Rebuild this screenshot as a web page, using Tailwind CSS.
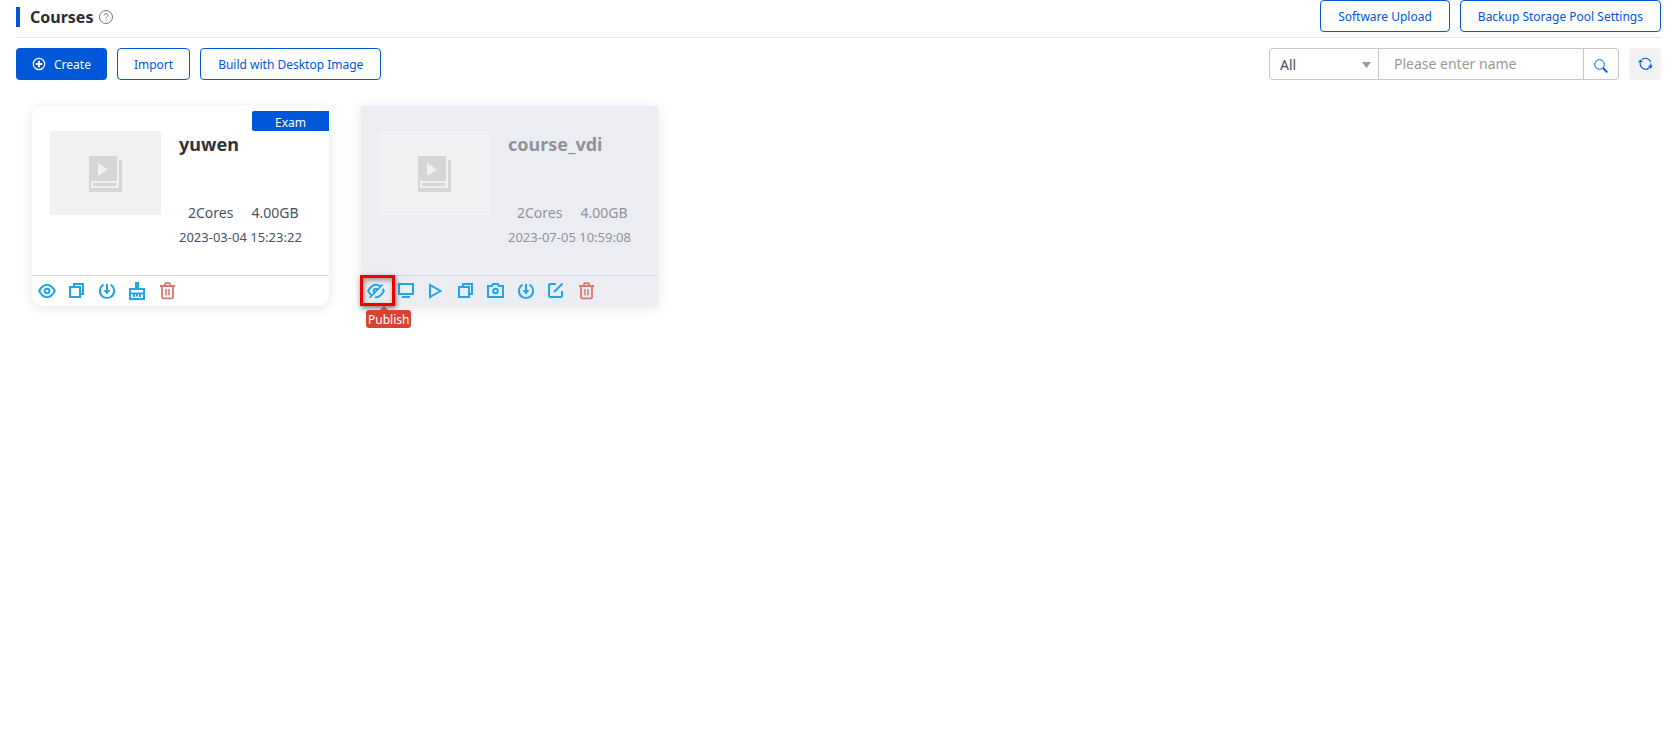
<!DOCTYPE html>
<html lang="en">
<head>
<meta charset="utf-8">
<meta name="viewport" content="width=device-width, initial-scale=1">
<title>Courses</title>
<script src="https://cdn.jsdelivr.net/npm/@tailwindcss/browser@4"></script>
</head>
<body class="bg-white font-['Noto_Sans','Open_Sans',sans-serif] text-[#4a5364]">
<svg class="hidden" aria-hidden="true">
  <symbol id="copy" viewBox="0 0 18 18"><path d="M2 5h10v10H2zM6 5V2h9v10h-3" fill="none" stroke="currentColor" stroke-width="2"/></symbol>
  <symbol id="power" viewBox="0 0 18 18"><path d="M5.500 2.600a7.200 7.200 0 1 0 7 0" fill="none" stroke="currentColor" stroke-width="2"/><path d="M9 2v7" stroke="currentColor" stroke-width="2"/><path d="M5.500 8h7L9 12.500z" fill="currentColor"/></symbol>
  <symbol id="trash" viewBox="0 0 18 18"><path d="M2 4h15M6.500 3.500L7.500 1.200h4l1 2.300M4 4v11.500l.8.800h9.400l.8-.8V4" fill="none" stroke="currentColor" stroke-width="1.800"/><path d="M8 7v6.500M11 7v6.500" stroke="currentColor" stroke-width="1.500"/></symbol>
  <symbol id="book" viewBox="0 0 33 36"><path d="M0 0h28v25H2v7h28V4h3v32H0z" fill="#d6d6d6"/><path d="M4 27h23v3H4z" fill="#d6d6d6"/><path d="M9 7v13l10-6.500z" fill="#f2f2f4"/></symbol>
</svg>

<main class="min-h-screen pl-4 pr-3.5">
  <header class="flex h-[38px] items-start justify-between border-b border-[#e6e6e6]">
    <div class="flex h-[34px] items-center">
      <span class="h-5 w-1 bg-[#0057d9]"></span>
      <h1 class="ml-2.5 text-base leading-5 font-bold text-[#2b2e33]">Courses</h1>
      <button type="button" aria-label="Help" class="ml-1.5 text-[#777]"><svg class="block size-3.5" viewBox="0 0 14 14" fill="none" stroke="currentColor"><circle cx="7" cy="7" r="6.500"/><path d="M5.200 5.500c0-2.500 3.700-2.300 3.700-.2 0 1.500-1.900 1.400-1.900 3.200M7 9.700v1.200"/></svg></button>
    </div>
    <div class="flex gap-2.5 text-xs text-[#0057d9]">
      <button type="button" class="h-8 rounded border border-[#0057d9] px-[17px] pt-0.5">Software Upload</button>
      <button type="button" class="h-8 rounded border border-[#0057d9] px-[17px] pt-0.5">Backup Storage Pool Settings</button>
    </div>
  </header>

  <div class="mt-2.5 flex items-center justify-between">
    <div class="flex gap-2.5 text-xs text-[#0057d9]">
      <button type="button" class="flex h-8 items-center gap-2 rounded bg-[#0057d9] px-4 text-white"><svg class="size-3.5" viewBox="0 0 14 14" fill="none" stroke="currentColor"><circle cx="7" cy="7" r="5.700" stroke-width="1.200"/><path d="M7 3.800v6.400M3.800 7h6.400" stroke-width="2"/></svg><span class="pt-0.5">Create</span></button>
      <button type="button" class="h-8 rounded border border-[#0057d9] px-4 pt-0.5">Import</button>
      <button type="button" class="h-8 rounded border border-[#0057d9] px-[17px] pt-0.5">Build with Desktop Image</button>
    </div>
    <div class="flex gap-2.5 text-sm">
      <form class="flex h-8 overflow-hidden rounded border border-[#c8c8c8]">
        <div class="relative w-[109px] border-r border-[#c8c8c8]">
          <select aria-label="Course type" class="h-full w-full appearance-none pl-2.5 pt-0.5 text-[#4a4f5a] outline-none"><option>All</option></select>
          <svg class="pointer-events-none absolute right-1.5 top-3 h-2 w-2.5" viewBox="0 0 10 8" fill="#999"><path d="M0 1h9L4.500 7z"/></svg>
        </div>
        <input type="text" aria-label="Name" placeholder="Please enter name" class="w-[204px] pl-[15px] text-[#4a4f5a] outline-none placeholder:text-[#999]">
        <button type="button" aria-label="Search" class="flex w-[35px] items-center justify-center border-l border-[#c8c8c8] text-[#0057d9]"><svg class="mt-1 size-3.5" viewBox="0 0 14 14" fill="none" stroke="currentColor"><circle cx="5.500" cy="5.500" r="4.800"/><path d="M9 9l4.300 4.300" stroke-width="1.800"/></svg></button>
      </form>
      <button type="button" aria-label="Refresh" class="flex size-8 items-center justify-center rounded bg-[#f2f2f2] text-[#0057d9]"><svg class="h-3.5 w-[15px]" viewBox="0 0 15 14" fill="none" stroke="currentColor"><path d="M4 2.500A5.500 5.500 0 0 1 12.700 5M2.200 5.500c-.7 5.500 5.300 8.500 9 5.500M12.800 9V6.500" stroke-width="1.100"/><path d="M0 5.500L2.300 2.500 5 5zM10 8.800h4.800l-2.400 3z" fill="currentColor" stroke="none"/></svg></button>
    </div>
  </div>

  <section class="mt-[26px] flex flex-wrap gap-8 pl-4 pb-8">
    <article class="relative w-[297px] rounded-[10px] bg-white shadow-[0_2px_12px_rgba(0,0,0,0.1)]">
      <span class="absolute right-0 top-[5px] flex h-5 w-[77px] items-center justify-center rounded-l-xs bg-[#0057d9] pt-1 text-xs text-white">Exam</span>
      <div class="flex h-[169px] pl-[18px] pt-[25px]">
        <div class="flex h-[84px] w-[111px] items-center justify-center bg-[#f1f1f3] pt-0.5"><svg class="h-9 w-[33px]"><use href="#book"/></svg></div>
        <div class="ml-[18px] pt-px">
          <h2 class="text-lg leading-6 font-bold text-[#303238]">yuwen</h2>
          <p class="mt-[47px] flex gap-[18px] pl-[9px] text-sm leading-5"><span>2Cores</span><span>4.00GB</span></p>
          <p class="mt-1 text-[13px] leading-5">2023-03-04 15:23:22</p>
        </div>
      </div>
      <div class="flex h-[31px] items-center gap-3 border-t border-[#d9dbe6] pl-1.5 text-[#20a5e7]">
        <button type="button" aria-label="Unpublish"><svg class="block size-[18px]" viewBox="0 0 18 18" fill="none" stroke="currentColor" stroke-width="2"><path d="M1.200 9C5.500.800 12.500.800 16.800 9 12.500 17.200 5.500 17.200 1.200 9z"/><circle cx="9" cy="9" r="2.300"/></svg></button>
        <button type="button" aria-label="Copy"><svg class="block size-[18px]"><use href="#copy"/></svg></button>
        <button type="button" aria-label="Export"><svg class="block size-[18px]"><use href="#power"/></svg></button>
        <button type="button" aria-label="Clean"><svg class="block size-[18px]" viewBox="0 0 18 18" fill="none" stroke="currentColor" stroke-width="2"><path d="M9 0v7" stroke-width="4"/><path d="M2 7h14v10H2zM1 11.500h16M6 12v3M9 12v2.500M12 12v3"/></svg></button>
        <button type="button" aria-label="Delete" class="text-[#dc7670]"><svg class="block size-[18px]"><use href="#trash"/></svg></button>
      </div>
    </article>

    <article class="w-[297px] bg-[#ecedf3] text-[#919399] shadow-[0_2px_12px_rgba(0,0,0,0.1)]">
      <div class="flex h-[169px] pl-[18px] pt-[25px]">
        <div class="flex h-[84px] w-[111px] items-center justify-center bg-[#f1f1f3] pt-0.5"><svg class="h-9 w-[33px]"><use href="#book"/></svg></div>
        <div class="ml-[18px] pt-px">
          <h2 class="text-lg leading-6 font-bold">course_vdi</h2>
          <p class="mt-[47px] flex gap-[18px] pl-[9px] text-sm leading-5"><span>2Cores</span><span>4.00GB</span></p>
          <p class="mt-1 text-[13px] leading-5">2023-07-05 10:59:08</p>
        </div>
      </div>
      <div class="relative flex h-[31px] items-center gap-3 border-t border-[#d9dbe6] pl-1.5 text-[#20a5e7]">
        <span class="pointer-events-none absolute -left-px -top-px h-[31px] w-[35px] border-3 border-[#f00000] shadow-[1px_2px_5px_rgba(0,0,0,0.5),inset_1px_2px_5px_rgba(0,0,0,0.4)]"></span>
        <span id="tip" role="tooltip" class="absolute left-[5px] top-[34px] h-[18px] rounded-[3px] bg-[#d64533] px-0.5 text-xs leading-5 text-white"><svg class="absolute -top-1 left-3.5 h-1 w-2" viewBox="0 0 8 4" fill="#b95145"><path d="M4 0l4 4H0z"/></svg>Publish</span>
        <button type="button" aria-label="Publish" aria-describedby="tip"><svg class="block size-[18px]" viewBox="0 0 18 18" fill="none" stroke="currentColor" stroke-width="2"><path d="M1.200 9C5.500.800 12.500.800 16.800 9 12.500 17.200 5.500 17.200 1.200 9z"/><circle cx="9" cy="9" r="2.300"/><path d="M4 17L17 3.500" stroke="#ecedf3" stroke-width="3"/><path d="M2.500 16L15.500 2.500" stroke-width="1.800"/></svg></button>
        <button type="button" aria-label="Desktop"><svg class="block size-[18px]" viewBox="0 0 18 18" fill="none" stroke="currentColor" stroke-width="2"><path d="M2 2h14v10H2zM5 15h8"/></svg></button>
        <button type="button" aria-label="Start"><svg class="block size-[18px]" viewBox="0 0 18 18" fill="none" stroke="currentColor" stroke-width="2"><path d="M3 3v12l10.500-6z"/></svg></button>
        <button type="button" aria-label="Copy"><svg class="block size-[18px]"><use href="#copy"/></svg></button>
        <button type="button" aria-label="Snapshot"><svg class="block size-[18px]" viewBox="0 0 18 18" fill="none" stroke="currentColor" stroke-width="2"><path d="M1 4h4l1-2h5l1 2h4v11H1z"/><circle cx="8.500" cy="9" r="2.300"/></svg></button>
        <button type="button" aria-label="Export"><svg class="block size-[18px]"><use href="#power"/></svg></button>
        <button type="button" aria-label="Edit"><svg class="block size-[18px]" viewBox="0 0 18 18" fill="none" stroke="currentColor" stroke-width="2"><path d="M9 2H3L2 3v11l1 1h11l1-1V9M7 10l8.500-8.500"/></svg></button>
        <button type="button" aria-label="Delete" class="text-[#dc7670]"><svg class="block size-[18px]"><use href="#trash"/></svg></button>
      </div>
    </article>
  </section>
</main>
</body>
</html>
